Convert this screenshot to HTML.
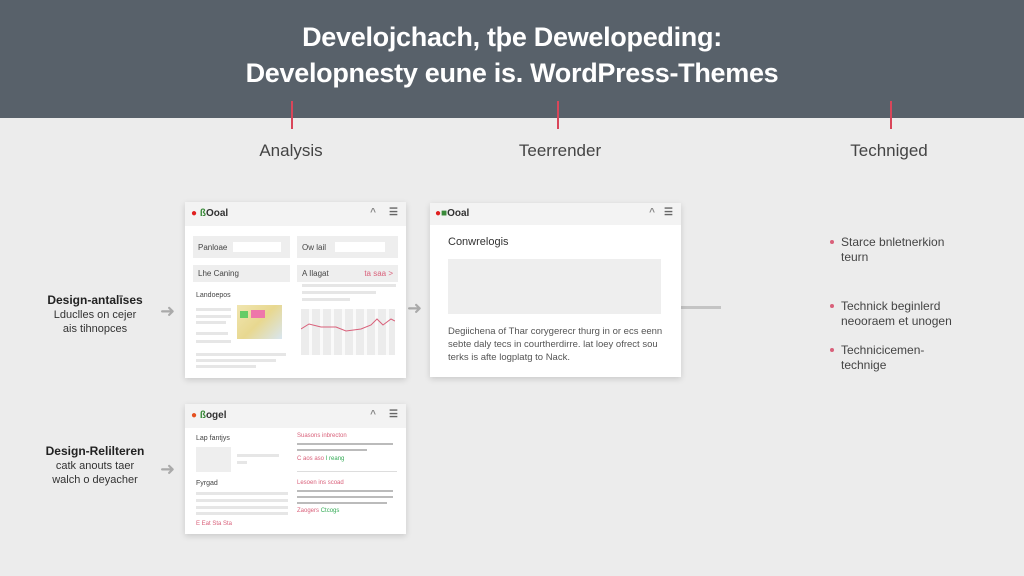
<!DOCTYPE html><html><head><meta charset="utf-8"><style>
*{margin:0;padding:0;box-sizing:border-box}
body{width:1024px;height:576px;overflow:hidden;background:#ececec;font-family:"Liberation Sans",sans-serif;position:relative}
.a{position:absolute}
.hdr{left:0;top:0;width:1024px;height:118px;background:#58616a}
.t{color:#fff;font-size:27px;font-weight:bold;text-align:center;width:1024px;letter-spacing:-0.3px}
.red{background:#d9465a;width:2px}
.lbl{font-size:17px;color:#444;text-align:center;width:200px}
.card{background:#fff;box-shadow:0 2px 6px rgba(0,0,0,.15)}
.ch{left:0;top:0;right:0;height:24px;background:#f3f3f3;font-size:10px;font-weight:bold;color:#333}
.g{background:#eeeeee}
.ln{background:#e6e6e6;height:3px}
.s{font-size:8px;color:#444}
.pk{color:#d9607a}
.side{font-size:11px;color:#333;text-align:center;width:150px;line-height:14px}
.bul{font-size:12px;color:#444;line-height:15px}
.dot{width:4px;height:4px;border-radius:50%;background:#d9607a}
.arr{color:#aaa;font-size:18px}
</style></head><body>
<div class="a hdr"></div>
<div class="a t" style="top:22px">Develojchach, tþe Dewelopeding:</div>
<div class="a t" style="top:58px">Developnesty eune is. WordPress-Themes</div>
<div class="a red" style="left:291px;top:101px;height:28px"></div>
<div class="a red" style="left:557px;top:101px;height:28px"></div>
<div class="a red" style="left:890px;top:101px;height:28px"></div>
<div class="a lbl" style="left:191px;top:141px">Analysis</div>
<div class="a lbl" style="left:460px;top:141px">Teerrender</div>
<div class="a lbl" style="left:789px;top:141px">Techniged</div>

<div class="a side" style="left:20px;top:293px"><b style="font-size:12px;color:#222">Design-antalīses</b><br>Lduclles on cejer<br>ais tihnopces</div>
<div class="a side" style="left:20px;top:444px"><b style="font-size:12px;color:#222">Design-Relilteren</b><br>catk anouts taer<br>walch o deyacher</div>
<div class="a arr" style="left:160px;top:301px">➜</div>
<div class="a arr" style="left:160px;top:459px">➜</div>
<div class="a arr" style="left:407px;top:298px">➜</div>
<div class="a" style="left:681px;top:306px;width:40px;height:3px;background:#c4c4c4"></div>

<!-- card1 -->
<div class="a card" style="left:185px;top:202px;width:221px;height:176px">
 <div class="a ch"><span class="a" style="left:6px;top:6px"><span style="color:#e02020">●</span> <span style="color:#3a8a3a">ß</span>Ooal</span><span class="a" style="right:30px;top:5px;color:#888">^</span><span class="a" style="right:8px;top:5px;color:#666">☰</span></div>
 <div class="a g" style="left:8px;top:34px;width:97px;height:22px"><span class="a s" style="left:5px;top:7px">Panloae</span><div class="a" style="left:40px;top:6px;width:48px;height:10px;background:#fff"></div></div>
 <div class="a g" style="left:112px;top:34px;width:101px;height:22px"><span class="a s" style="left:5px;top:7px">Ow lail</span><div class="a" style="left:38px;top:6px;width:50px;height:10px;background:#fff"></div></div>
 <div class="a g" style="left:8px;top:63px;width:97px;height:17px"><span class="a s" style="left:5px;top:4px">Lhe Caning</span></div>
 <div class="a g" style="left:112px;top:63px;width:101px;height:17px"><span class="a s" style="left:5px;top:4px">A Ilagat</span><span class="a s pk" style="right:5px;top:4px">ta saa &gt;</span></div>
 <span class="a s" style="left:11px;top:90px;font-size:7px">Landoepos</span>
 <div class="a ln" style="left:11px;top:106px;width:35px"></div><div class="a ln" style="left:11px;top:113px;width:35px"></div><div class="a ln" style="left:11px;top:119px;width:30px"></div><div class="a ln" style="left:11px;top:130px;width:32px"></div><div class="a ln" style="left:11px;top:138px;width:35px"></div>
 <div class="a" style="left:52px;top:103px;width:45px;height:34px;background:linear-gradient(135deg,#f0e5b0,#e8d890 50%,#d9e6f0);"><div class="a" style="left:3px;top:6px;width:8px;height:7px;background:#6c6"></div><div class="a" style="left:14px;top:5px;width:14px;height:8px;background:#e7a"></div></div>
 <div class="a ln" style="left:11px;top:151px;width:90px"></div><div class="a ln" style="left:11px;top:157px;width:80px"></div><div class="a ln" style="left:11px;top:163px;width:60px"></div>
 <div class="a ln" style="left:117px;top:82px;width:94px"></div><div class="a ln" style="left:117px;top:89px;width:74px"></div><div class="a ln" style="left:117px;top:96px;width:48px"></div>
 <div class="a" style="left:116px;top:107px;width:94px;height:46px;background:repeating-linear-gradient(90deg,#ececec 0 8px,#fafafa 8px 11px)"></div>
 <svg class="a" style="left:116px;top:107px" width="94" height="46"><polyline points="0,20 8,15 20,18 35,18 45,22 60,20 70,16 76,10 82,16 90,10 94,12" fill="none" stroke="#d9607a" stroke-width="1"/></svg>
</div>

<!-- card2 -->
<div class="a card" style="left:185px;top:404px;width:221px;height:130px">
 <div class="a ch"><span class="a" style="left:6px;top:6px"><span style="color:#e55020">●</span> <span style="color:#3a8a3a">ß</span>ogel</span><span class="a" style="right:30px;top:5px;color:#888">^</span><span class="a" style="right:8px;top:5px;color:#666">☰</span></div>
 <span class="a s" style="left:11px;top:31px;font-size:7px">Lap fantjys</span>
 <div class="a g" style="left:11px;top:43px;width:35px;height:25px"></div>
 <div class="a ln" style="left:52px;top:50px;width:42px"></div><div class="a ln" style="left:52px;top:57px;width:10px"></div>
 <span class="a s" style="left:11px;top:76px;font-size:7px">Fyrgad</span>
 <div class="a ln" style="left:11px;top:88px;width:92px"></div><div class="a ln" style="left:11px;top:95px;width:92px"></div><div class="a ln" style="left:11px;top:102px;width:92px"></div><div class="a ln" style="left:11px;top:108px;width:92px"></div>
 <span class="a s pk" style="left:11px;top:117px;font-size:6px">E Eat Sta Sta</span>
 <span class="a s pk" style="left:112px;top:29px;font-size:6px">Suasons inbrecton</span>
 <div class="a ln" style="left:112px;top:39px;width:96px;height:2px;background:#bbb"></div><div class="a ln" style="left:112px;top:45px;width:70px;height:2px;background:#bbb"></div>
 <span class="a s" style="left:112px;top:52px;font-size:6px"><span class="pk">C aos aso</span> <span style="color:#3a5">I reang</span></span>
 <div class="a" style="left:112px;top:67px;width:100px;height:1px;background:#ddd"></div>
 <span class="a s pk" style="left:112px;top:76px;font-size:6px">Lesoen ins scoad</span>
 <div class="a ln" style="left:112px;top:86px;width:96px;height:2px;background:#bbb"></div><div class="a ln" style="left:112px;top:92px;width:96px;height:2px;background:#bbb"></div><div class="a ln" style="left:112px;top:98px;width:90px;height:2px;background:#bbb"></div>
 <span class="a s" style="left:112px;top:104px;font-size:6px"><span class="pk">Zaogers</span> <span style="color:#3a5">Ctcogs</span></span>
</div>

<!-- card3 -->
<div class="a card" style="left:430px;top:203px;width:251px;height:174px">
 <div class="a ch" style="height:22px"><span class="a" style="left:5px;top:5px"><span style="color:#e02020">●</span><span style="color:#3a8a3a">■</span>Ooal</span><span class="a" style="right:26px;top:4px;color:#888">^</span><span class="a" style="right:8px;top:4px;color:#666">☰</span></div>
 <span class="a" style="left:18px;top:33px;font-size:11px;color:#333">Conwrelogis</span>
 <div class="a g" style="left:18px;top:56px;width:213px;height:55px"></div>
 <div class="a" style="left:18px;top:122px;font-size:9.5px;color:#555;line-height:13px;width:225px">Degiichena of Thar corygerecr thurg in or ecs eenn sebte daly tecs in courtherdirre. lat loey ofrect sou terks is afte logplatg to Nack.</div>
</div>

<div class="a dot" style="left:830px;top:240px"></div>
<div class="a bul" style="left:841px;top:235px">Starce bnletnerkion<br>teurn</div>
<div class="a dot" style="left:830px;top:304px"></div>
<div class="a bul" style="left:841px;top:299px">Technick beginlerd<br>neooraem et unogen</div>
<div class="a dot" style="left:830px;top:348px"></div>
<div class="a bul" style="left:841px;top:343px">Technicicemen-<br>technige</div>
</body></html>
